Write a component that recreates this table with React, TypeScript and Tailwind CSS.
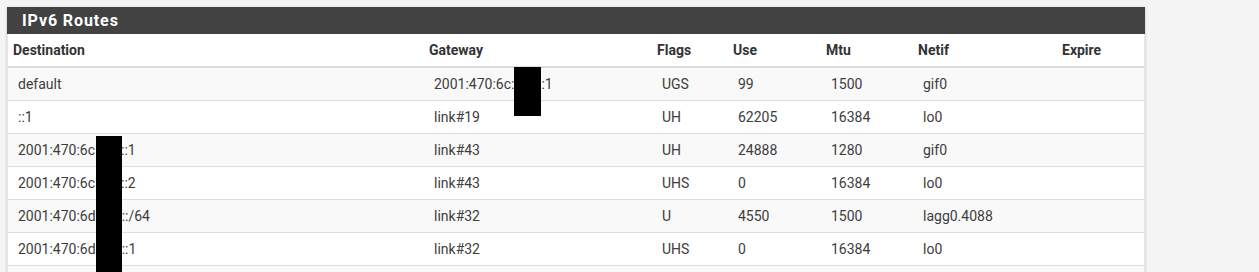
import React from 'react';

const cols = 'grid grid-cols-[416px_228px_76px_93px_92px_144px_87px]';

type Route = {
  dest: React.ReactNode;
  gateway: React.ReactNode;
  flags: string;
  use: string;
  mtu: string;
  netif: string;
  expire: string;
};

// the redacted part of an address: kept as blank space, the black bar sits on top
function Hidden({ w }: { w: string }) {
  return <span className={`inline-block ${w}`} />;
}

const routes: Route[] = [
  { dest: 'default', gateway: <>2001:470:6c:<Hidden w="w-[27px]" />:1</>, flags: 'UGS', use: '99', mtu: '1500', netif: 'gif0', expire: '' },
  { dest: '::1', gateway: 'link#19', flags: 'UH', use: '62205', mtu: '16384', netif: 'lo0', expire: '' },
  { dest: <>2001:470:6c<Hidden w="w-[26px]" />::1</>, gateway: 'link#43', flags: 'UH', use: '24888', mtu: '1280', netif: 'gif0', expire: '' },
  { dest: <>2001:470:6c<Hidden w="w-[26px]" />::2</>, gateway: 'link#43', flags: 'UHS', use: '0', mtu: '16384', netif: 'lo0', expire: '' },
  { dest: <>2001:470:6d<Hidden w="w-[26px]" />::/64</>, gateway: 'link#32', flags: 'U', use: '4550', mtu: '1500', netif: 'lagg0.4088', expire: '' },
  { dest: <>2001:470:6d<Hidden w="w-[26px]" />::1</>, gateway: 'link#32', flags: 'UHS', use: '0', mtu: '16384', netif: 'lo0', expire: '' },
];

const headers = ['Destination', 'Gateway', 'Flags', 'Use', 'Mtu', 'Netif', 'Expire'];

export default function App() {
  return (
    <div className="relative min-h-screen bg-[#f4f4f4] pt-[7px] pl-[7px] font-['Roboto',sans-serif] text-[14px]">
      <div className="w-[1138px] bg-white shadow-[0_1px_3px_rgba(0,0,0,0.18)]">
        {/* Panel heading */}
        <div className="h-[27px] bg-[#424242] pl-[15px] flex items-center">
          <h2 className="text-[16px] font-bold text-white tracking-[0.9px] leading-none">IPv6 Routes</h2>
        </div>

        <div className="border-x border-[#e6e6e6]">
          {/* Column headings */}
          <div className={`${cols} h-[34px] border-b-2 border-[#ddd]`}>
            {headers.map((h) => (
              <div key={h} className="pl-[5px] flex items-center font-bold text-[#333]">
                {h}
              </div>
            ))}
          </div>

          {/* Rows */}
          {routes.map((r, i) => (
            <div
              key={i}
              className={`${cols} ${i === 0 ? 'h-[32px]' : 'h-[33px] border-t border-[#ddd]'} ${i % 2 === 0 ? 'bg-[#f9f9f9]' : 'bg-white'} text-[#3d3d3d]`}
            >
              <div className="pl-[10px] flex items-center whitespace-nowrap">{r.dest}</div>
              <div className="pl-[10px] flex items-center whitespace-nowrap">{r.gateway}</div>
              <div className="pl-[10px] flex items-center">{r.flags}</div>
              <div className="pl-[10px] flex items-center">{r.use}</div>
              <div className="pl-[10px] flex items-center">{r.mtu}</div>
              <div className="pl-[10px] flex items-center">{r.netif}</div>
              <div className="pl-[10px] flex items-center">{r.expire}</div>
            </div>
          ))}
          <div className={`${cols} h-[33px] border-t border-[#ddd] bg-[#f9f9f9]`} />
        </div>
      </div>

      {/* redaction bars laid over the table */}
      <div className="absolute left-[514px] top-[67px] w-[27px] h-[49px] bg-black" />
      <div className="absolute left-[96px] top-[136px] w-[26px] h-[140px] bg-black" />
    </div>
  );
}
